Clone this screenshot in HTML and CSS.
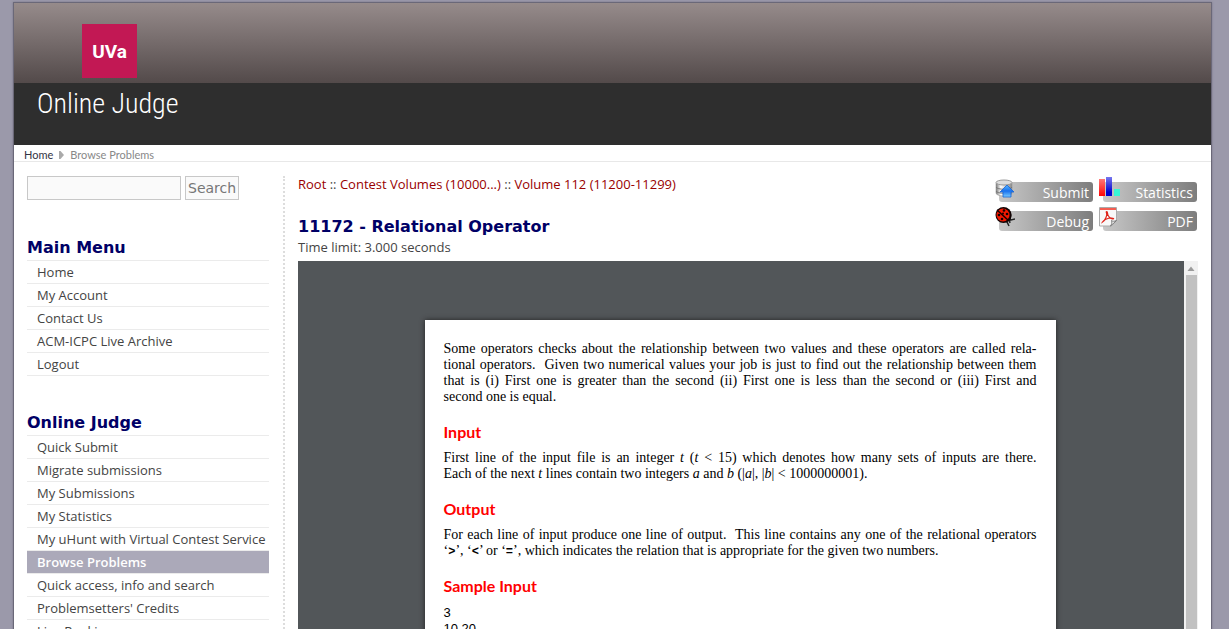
FILE: index.html
```html
<!DOCTYPE html>
<html lang="en">
<head>
<meta charset="utf-8">
<title>UVa Online Judge - Relational Operator</title>
<link rel="stylesheet" href="styles.css">
</head>
<body>
<div class="page">
  <header class="banner">
    <div class="banner-top"><span class="logo">UVa</span></div>
    <div class="banner-bottom"><span class="site-name">Online Judge</span></div>
  </header>
  <nav class="pathway" aria-label="Breadcrumb">
    <a href="#">Home</a>
    <svg width="5" height="8" viewBox="0 0 5 8" aria-hidden="true"><path d="M0 0h1.500L5 4 1.500 8H0z" fill="#aaa"/></svg>
    <span>Browse Problems</span>
  </nav>
  <div class="columns">
    <aside class="sidebar">
      <form class="search">
        <input type="text" aria-label="Search">
        <button type="button">Search</button>
      </form>
      <section class="menu">
        <h2>Main Menu</h2>
        <ul>
          <li><a href="#">Home</a></li>
          <li><a href="#">My Account</a></li>
          <li><a href="#">Contact Us</a></li>
          <li><a href="#">ACM-ICPC Live Archive</a></li>
          <li><a href="#">Logout</a></li>
        </ul>
      </section>
      <section class="menu">
        <h2>Online Judge</h2>
        <ul>
          <li><a href="#">Quick Submit</a></li>
          <li><a href="#">Migrate submissions</a></li>
          <li><a href="#">My Submissions</a></li>
          <li><a href="#">My Statistics</a></li>
          <li><a href="#">My uHunt with Virtual Contest Service</a></li>
          <li><a class="active" href="#">Browse Problems</a></li>
          <li><a href="#">Quick access, info and search</a></li>
          <li><a href="#">Problemsetters' Credits</a></li>
          <li><a href="#">Live Rankings</a></li>
        </ul>
      </section>
    </aside>
    <main class="main">
      <div class="problem-head">
        <div>
          <p class="trail"><a href="#">Root</a> :: <a href="#">Contest Volumes (10000...)</a> :: <a href="#">Volume 112 (11200-11299)</a></p>
          <h1>11172 - Relational Operator</h1>
          <p class="limit">Time limit: 3.000 seconds</p>
        </div>
        <div class="actions">
          <a href="#">
            <svg width="20" height="20" viewBox="0 0 20 20" aria-hidden="true">
              <defs>
                <linearGradient id="disk"><stop offset="0" stop-color="#777"/><stop offset=".3" stop-color="#fff"/><stop offset="1" stop-color="#888"/></linearGradient>
                <linearGradient id="arrow" x2="0" y2="1"><stop offset="0" stop-color="#58b8ff"/><stop offset=".5" stop-color="#1870ee"/><stop offset="1" stop-color="#79ccff"/></linearGradient>
              </defs>
              <path d="M1 5v10c0 4 16 4 16 0V5z" fill="url(#disk)" stroke="#999" stroke-width=".6"/>
              <path d="M1 9c1 3 15 3 16 0M1 13c1 3 15 3 16 0" fill="none" stroke="#777"/>
              <ellipse cx="9" cy="4.500" rx="8" ry="2.500" fill="#ddd" stroke="#999"/>
              <path d="M12 7L19 14h-3v5H8v-5H5z" fill="url(#arrow)" stroke="#1764d5" stroke-width=".8"/>
            </svg>Submit</a>
          <a href="#">
            <svg width="22" height="22" viewBox="0 0 22 22" aria-hidden="true">
              <defs>
                <linearGradient id="red" x2="0" y2="1"><stop offset="0" stop-color="#ff7777"/><stop offset="1" stop-color="#ff0505"/></linearGradient>
                <linearGradient id="blue" x2="0" y2="1"><stop offset="0" stop-color="#7777ee"/><stop offset=".8" stop-color="#0000d0"/></linearGradient>
              </defs>
              <path d="M0 3h6v17H0z" fill="url(#red)"/><path d="M7 1h6v19H7z" fill="url(#blue)"/><path d="M15 13h6v7h-6z" fill="#38f5d5"/>
            </svg>Statistics</a>
          <a href="#">
            <svg width="20" height="20" viewBox="0 0 20 20" aria-hidden="true">
              <path d="M12 11l4 2 4-1M10 12l2 3 2 4M14 12l1 4" fill="none" stroke="#222" stroke-width="1.500"/>
              <path d="M11 2c5 0 7 7 4 11l-4 1z" fill="#090909"/>
              <circle cx="8.500" cy="8" r="8" fill="#130404"/><circle cx="8" cy="8" r="6.500" fill="#f51800"/>
              <path d="M2 3l12 11" stroke="#160000" stroke-width="1.500"/>
              <g fill="#160000"><circle cx="9" cy="3.500" r="1.300"/><circle cx="12" cy="7" r="1.300"/><circle cx="8" cy="6.500" r="1"/><circle cx="4" cy="8" r="1.300"/><circle cx="7" cy="12" r="1.300"/></g>
            </svg>Debug</a>
          <a href="#">
            <svg width="20" height="20" viewBox="0 0 20 20" aria-hidden="true">
              <path d="M.5 .5h17v13l-5 5.500H.5z" fill="#f8f8f8" stroke="#aaa"/>
              <path d="M1 1h16v2H1z" fill="#f45d51"/>
              <path d="M17.500 13.500c-2 1-4 1-5 0 1 2 0 4-1 5.500z" fill="#fff" stroke="#777"/>
              <path d="M3.500 15c3-2 5-7 4-9-1-2 1-2 1 0 0 3 3 6 5 6 2 0 1-1-1-1-4 0-8 2-9 4z" fill="none" stroke="#df2319" stroke-width="1.200"/>
            </svg>PDF</a>
        </div>
      </div>
      <div class="viewer">
        <article class="sheet">
          <p><span class="line">Some operators checks about the relationship between two values and these operators are called rela-</span>
          <span class="line">tional operators.&nbsp; Given two numerical values your job is just to find out the relationship between them</span>
          <span class="line">that is (i) First one is greater than the second (ii) First one is less than the second or (iii) First and</span>
          second one is equal.</p>
          <h2>Input</h2>
          <p><span class="line">First line of the input file is an integer <i>t</i> (<i>t</i> &lt; 15) which denotes how many sets of inputs are there.</span>
          Each of the next <i>t</i> lines contain two integers <i>a</i> and <i>b</i> (|<i>a</i>|, |<i>b</i>| &lt; 1000000001).</p>
          <h2>Output</h2>
          <p><span class="line">For each line of input produce one line of output.&nbsp; This line contains any one of the relational operators</span>
          ‘<b>&gt;</b>’, ‘<b>&lt;</b>’ or ‘<b>=</b>’, which indicates the relation that is appropriate for the given two numbers.</p>
          <h2>Sample Input</h2>
          <pre>3
10 20
20 10
10 10</pre>
        </article>
        <div class="scrollbar" aria-hidden="true">
          <svg width="14" height="14" viewBox="0 0 14 14"><path d="M3.500 10L7 5.500 10.500 10z" fill="#9b9b9b"/></svg>
          <div class="thumb"></div>
        </div>
      </div>
    </main>
  </div>
</div>
</body>
</html>
```
FILE: styles.css
```css
* { box-sizing: border-box; }

body {
  margin: 0;
  height: 100vh;
  overflow: hidden;
  background: #9b99aa;
  color: #444;
  font: 13px/22px "Open Sans", sans-serif;
}

h1, h2, p, ul, pre { margin: 0; padding: 0; }
a { color: inherit; text-decoration: none; }

.page {
  margin: 2px 17px 0 13px;
  border: 1px solid #6a6878;
  border-bottom: 0;
  background: #fff;
  box-shadow: 0 0 2px #777587;
}

.banner-top {
  height: 80px;
  padding: 21px 68px 0;
  background: linear-gradient(#968b8b, #534a4a);
}
.logo {
  display: block;
  width: 55px;
  height: 54px;
  background: #c21854;
  color: #fff;
  font: bold 19px/56px Roboto, sans-serif;
  text-align: center;
}
.banner-bottom {
  height: 62px;
  padding-left: 23px;
  background: #2e2e2e;
}
.site-name {
  color: #fff;
  font: 300 28px/42px "Roboto Condensed", Lato, sans-serif;
}

.pathway {
  display: flex;
  align-items: center;
  gap: 6px;
  height: 17px;
  padding: 4px 10px 0;
  border-bottom: 1px solid #e8e8e8;
  color: #888;
  font: 11px/22px Lato, sans-serif;
}
.pathway a { color: #334; }

.columns {
  display: flex;
  padding: 14px 13px 0;
}
.sidebar {
  flex: none;
  width: 258px;
  padding-right: 14px;
  border-right: 2px dotted #ddd;
}
.search {
  display: flex;
  gap: 4px;
  margin-bottom: 36px;
}
.search input, .search button {
  height: 24px;
  padding: 0 2px;
  border: 1px solid #c8c8c8;
  border-radius: 0;
  background: #fafafa;
  color: #777;
  font: 14px "DejaVu Sans", sans-serif;
}
.search input { width: 154px; }

.menu { margin-bottom: 35px; }
.menu h2, h1 {
  color: #006;
  font: bold 16px/24px "DejaVu Sans", sans-serif;
}
.menu h2 { border-bottom: 1px solid #ebebeb; }
.menu ul { list-style: none; }
.menu li { border-bottom: 1px solid #ebebeb; }
.menu a {
  display: block;
  padding-left: 10px;
  white-space: nowrap;
}
.menu .active {
  background: #aba9b9;
  color: #fff;
  font-weight: 600;
}

.main {
  flex: 1;
  min-width: 0;
  padding-left: 13px;
}
.problem-head {
  display: flex;
  justify-content: space-between;
  height: 85px;
}
.trail { line-height: 17px; }
.trail a { color: #900; }
h1 { margin-top: 22px; }
.limit { line-height: 17px; }

.actions {
  display: grid;
  grid-template-columns: 94px 94px;
  gap: 9px 10px;
  align-content: start;
  padding: 6px 1px 0 0;
}
.actions a {
  position: relative;
  height: 20px;
  padding-right: 4px;
  border-radius: 3px;
  background: linear-gradient(90deg, #c8c8c8, #7d7d7d);
  color: #fff;
  font-size: 14px;
  line-height: 22px;
  text-align: right;
}
.actions svg {
  position: absolute;
  left: -4px;
  bottom: 4px;
}

.viewer {
  display: flex;
  justify-content: center;
  position: relative;
  padding: 59px 16px 0 0;
  background: #525659;
}
.sheet {
  width: 631px;
  min-height: 816px;
  padding: 21px 19px;
  background: #fff;
  box-shadow: 0 0 5px #222;
  color: #000;
  font: 14px/16px "Liberation Serif", serif;
}
.line {
  display: block;
  text-align-last: justify;
  white-space: nowrap;
}
.sheet h2 {
  margin: 18px 0 9px;
  color: #f00;
  font: bold 16px/18px Lato, sans-serif;
}
.sheet b { font-family: "Liberation Mono", monospace; font-size: 12px; line-height: 1; }
.sheet pre { margin-top: 10px; font: 13px/16px "Liberation Sans", sans-serif; }

.scrollbar {
  position: absolute;
  top: 0;
  right: 0;
  bottom: 0;
  width: 14px;
  background: #f1f1f1;
}
.scrollbar svg { display: block; }
.thumb {
  height: 600px;
  margin: 0 1px 0 2px;
  background: #c1c1c1;
}
```
